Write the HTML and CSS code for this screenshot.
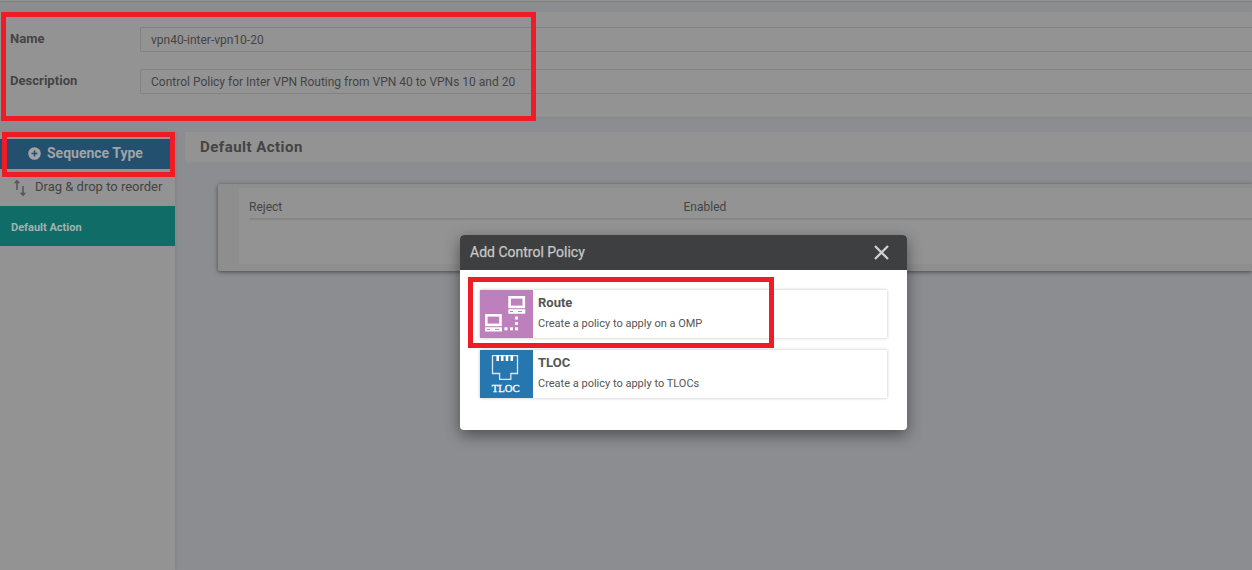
FILE: index.html
```html
<!DOCTYPE html>
<html lang="en">
<head>
<meta charset="utf-8">
<title>Add Control Policy</title>
<link rel="stylesheet" href="styles.css">
</head>
<body>
<div class="topbar"></div>
<section class="form">
  <div class="field"><label class="label">Name</label><div class="input">vpn40-inter-vpn10-20</div></div>
  <div class="field"><label class="label">Description</label><div class="input">Control Policy for Inter VPN Routing from VPN 40 to VPNs 10 and 20</div></div>
</section>
<main class="workspace">
  <aside class="sidebar">
    <div class="sequence">
      <svg width="13" height="13" viewBox="0 0 12 12"><circle cx="6" cy="6" r="5.8" fill="#a2a3a4"/><path d="M6 3.2v5.6M3.2 6h5.6" stroke="#24506f" stroke-width="1.5"/></svg>
      <span>Sequence Type</span>
    </div>
    <div class="reorder">
      <svg width="14" height="18" viewBox="0 0 14 18" fill="none" stroke="#555" stroke-width="1.5"><path d="M4 11V2M10 7v9"/><path d="M.8 4.2 4 .7l3.2 3.5zM6.8 13.8l3.2 3.5 3.2-3.5z" fill="#555" stroke="none"/></svg>
      <span>Drag &amp; drop to reorder</span>
    </div>
    <div class="default-item">Default Action</div>
  </aside>
  <section class="content">
    <h2 class="heading">Default Action</h2>
    <div class="card">
      <div class="card-body">
        <div class="card-row"><span>Reject</span><span>Enabled</span></div>
      </div>
    </div>
  </section>
</main>

<div class="dialog">
  <header class="dialog-header">
    <span>Add Control Policy</span>
    <svg width="15" height="15" viewBox="0 0 15 15" stroke="#d0d0d0" stroke-width="2.3"><path d="M1 1l13 13M14 1L1 14"/></svg>
  </header>
  <div class="dialog-body">
    <div class="option">
      <svg class="tile route" viewBox="0 0 53 48">
        <g fill="none" stroke="#fff" stroke-width="2.6"><rect x="29.6" y="7.3" width="14.2" height="9.6"/><rect x="6.3" y="25.3" width="14.2" height="9.6"/></g>
        <g fill="#fff"><rect x="28.3" y="19.3" width="17" height="4.4" rx=".6"/><rect x="5" y="37.2" width="17" height="4.4" rx=".6"/><rect x="35" y="26.5" width="3" height="3"/><rect x="35" y="32" width="3" height="3"/><rect x="35" y="37.3" width="3" height="3"/><rect x="24.5" y="37.3" width="3" height="3"/><rect x="30" y="37.3" width="3" height="3"/></g>
        <path d="M30 21.5h3M38 21.5h4M7 39.4h3M15 39.4h4" stroke="#bd80bd" stroke-width="1"/>
      </svg>
      <div class="option-text"><strong>Route</strong><span>Create a policy to apply on a OMP</span></div>
    </div>
    <div class="option">
      <svg class="tile tloc" viewBox="0 0 53 48">
        <path d="M12.5 5.6h25V23.5h-6.7v5.8H19.6v-5.8h-7.1z" fill="none" stroke="#d8e8f3" stroke-width="1.3"/>
        <path d="M17.7 5v6M22.2 5v6M27 5v6M31.8 5v6" stroke="#fff" stroke-width="2.6"/>
        <text class="tile-text" x="11.7" y="41.7" textLength="28" lengthAdjust="spacingAndGlyphs">TLOC</text>
      </svg>
      <div class="option-text"><strong>TLOC</strong><span>Create a policy to apply to TLOCs</span></div>
    </div>
  </div>
</div>

<div class="mark mark-form"></div>
<div class="mark mark-sequence"></div>
<div class="mark mark-route"></div>
</body>
</html>
```
FILE: styles.css
```css
* { box-sizing: border-box; }
body {
  margin: 0;
  width: 1252px;
  height: 570px;
  overflow: hidden;
  position: relative;
  display: flex;
  flex-direction: column;
  background: #8b8d91;
  color: #444;
  font-family: Roboto, "Liberation Sans", sans-serif;
  font-size: 12px;
}
svg { display: block; flex: none; }
.topbar { height: 2px; flex: none; background: #939393; border-bottom: 1px solid #828282; }
.form {
  flex: none;
  height: 105px;
  margin-top: 10px;
  padding: 15px 0 0 10px;
  background: #939393;
  display: flex;
  flex-direction: column;
  gap: 17px;
  box-shadow: 0 1px 2px rgba(0, 0, 0, .06);
}
.field { display: flex; height: 25px; }
.label { width: 130px; font-size: 13px; font-weight: 700; line-height: 23px; letter-spacing: .04px; }
.input {
  flex: 1;
  border: 1px solid #828282;
  border-right: 0;
  border-radius: 2px 0 0 2px;
  padding-left: 10px;
  line-height: 24px;
  font-size: 12px;
}
.workspace { flex: 1; margin-top: 15px; display: flex; gap: 10px; }
.sidebar { width: 175px; padding-top: 7px; background: #939393; box-shadow: 1px 0 3px rgba(0, 0, 0, .08); }
.sequence {
  height: 30px;
  background: #24506f;
  color: #a2a3a4;
  display: flex;
  align-items: center;
  gap: 6px;
  padding: 0 0 2px 28px;
  font-size: 14px;
  font-weight: 700;
}
.reorder { height: 37px; display: flex; align-items: center; gap: 8px; padding: 0 0 3px 13px; font-size: 13px; }
.reorder svg { margin-top: 4px; }
.default-item {
  height: 40px;
  padding-left: 11px;
  line-height: 43px;
  background: #106c67;
  color: #a6b1b0;
  font-size: 11px;
  font-weight: 700;
}
.content { flex: 1; }
.heading { margin: 0; height: 30px; padding-left: 15px; background: #939393; font-size: 15px; font-weight: 700; line-height: 30px; letter-spacing: .47px; }
.card {
  height: 87px;
  margin: 22px 0 0 33px;
  padding: 4px 0 7px 21px;
  background: #8e8e8e;
  border-radius: 2px 0 0 2px;
  box-shadow: 0 1px 4px rgba(0, 0, 0, .5);
}
.card-body { height: 76px; padding: 6px 0 0 10px; background: #939393; }
.card-row { height: 26px; display: grid; grid-template-columns: 434.5px 1fr; border-bottom: 2px solid #878787; line-height: 26px; }

.dialog {
  position: absolute;
  left: 460px;
  top: 235px;
  width: 447px;
  height: 195px;
  background: #fff;
  border-radius: 4px;
  overflow: hidden;
  box-shadow: 0 5px 15px rgba(0, 0, 0, .45);
}
.dialog-header {
  height: 35px;
  padding: 0 18px 1px 10px;
  display: flex;
  align-items: center;
  justify-content: space-between;
  background: #3e3f41;
  color: #c7c7c7;
  font-size: 14px;
  -webkit-text-stroke: .25px #c7c7c7;
}
.dialog-body { padding: 20px 20px 0; display: flex; flex-direction: column; gap: 12px; }
.option { height: 48px; display: flex; background: #fff; box-shadow: 0 0 3px rgba(0, 0, 0, .25); }
.tile { width: 53px; height: 48px; }
.route { background: #bd80bd; }
.tloc { background: #2676af; }
.tile-text { fill: #fff; stroke: #fff; stroke-width: .3px; font: 11px "Liberation Serif", serif; }
.option-text { padding: 4px 0 0 5px; display: flex; flex-direction: column; gap: 5px; color: #555; }
.option-text strong { font-size: 13px; line-height: 17px; }
.option-text span { font-size: 11px; line-height: 16px; }

.mark { position: absolute; border: 5px solid #ef1c25; }
.mark-form { left: 1px; top: 12px; width: 535px; height: 109px; }
.mark-sequence { left: 2px; top: 132px; width: 173px; height: 45px; }
.mark-route { left: 468px; top: 277px; width: 306px; height: 71px; }
```
